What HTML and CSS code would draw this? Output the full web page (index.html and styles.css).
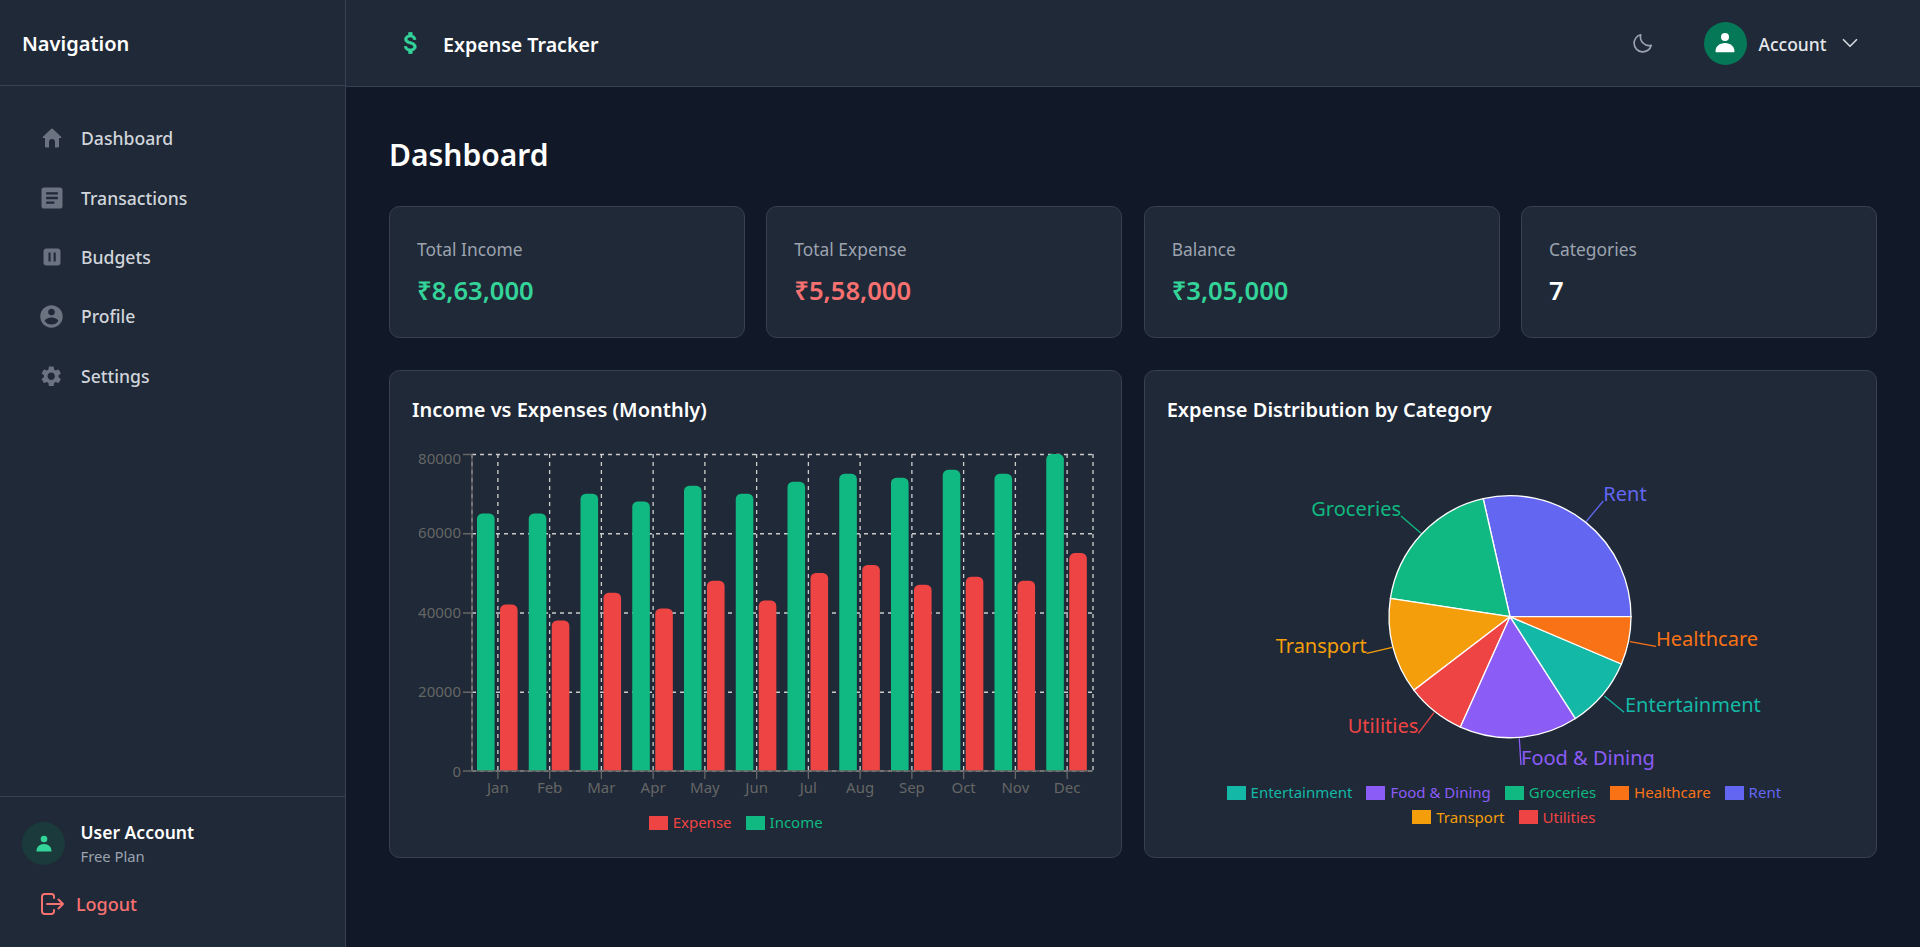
FILE: index.html
```html
<!DOCTYPE html>
<html lang="en">

<head>
    <meta charset="utf-8">
    <meta name="viewport" content="width=device-width, initial-scale=1">
    <title>Expense Tracker</title>
    <link rel="stylesheet" href="styles.css">
</head>

<body>
    <div class="layout">
        <aside class="sidebar">
            <div class="sidebar-head">Navigation</div>
            <nav class="side-nav">
                <a class="nav-link">
                    <span class="nav-icon"><svg width="20" height="20" viewBox="0 0 20 20"><path d="M9.300.8a1 1 0 0 1 1.400 0l8.600 8.200a.5.5 0 0 1-.3.9H17v8.600a1 1 0 0 1-1 1h-3v-5.500a3 3 0 0 0-6 0v5.500H4a1 1 0 0 1-1-1V9.900H1a.5.5 0 0 1-.3-.9z"/></svg></span>
                    Dashboard
                </a>
                <a class="nav-link">
                    <span class="nav-icon"><svg width="28" height="28" viewBox="0 0 24 24"><path d="M19 3H5c-1.100 0-2 .9-2 2v14c0 1.100.9 2 2 2h14c1.100 0 2-.9 2-2V5c0-1.100-.9-2-2-2zm-5 14H7v-2h7v2zm3-4H7v-2h10v2zm0-4H7V7h10v2z"/></svg></span>
                    Transactions
                </a>
                <a class="nav-link">
                    <span class="nav-icon"><svg width="24" height="24" viewBox="0 0 24 24"><path fill-rule="evenodd" d="M6.500 3.500h11a3 3 0 0 1 3 3v11a3 3 0 0 1-3 3h-11a3 3 0 0 1-3-3v-11a3 3 0 0 1 3-3zM8.500 7.500v9h2.100v-9zm5.100 0v9h2.100v-9z"/></svg></span>
                    Budgets
                </a>
                <a class="nav-link">
                    <span class="nav-icon"><svg width="27" height="27" viewBox="0 0 24 24"><path d="M12 2C6.480 2 2 6.480 2 12s4.480 10 10 10 10-4.480 10-10S17.520 2 12 2zm0 3c1.660 0 3 1.340 3 3s-1.340 3-3 3-3-1.340-3-3 1.340-3 3-3zm0 14.200c-2.500 0-4.710-1.280-6-3.220.030-1.990 4-3.080 6-3.080 1.990 0 5.970 1.090 6 3.080-1.290 1.940-3.500 3.220-6 3.220z"/></svg></span>
                    Profile
                </a>
                <a class="nav-link">
                    <span class="nav-icon"><svg width="24.500" height="24.500" viewBox="0 0 24 24"><path d="M19.140 12.940c.04-.3.06-.61.06-.94 0-.32-.02-.64-.07-.94l2.030-1.580c.18-.14.23-.41.12-.61l-1.920-3.320c-.12-.22-.37-.29-.59-.22l-2.390.96c-.5-.38-1.030-.7-1.620-.94l-.36-2.540c-.04-.24-.24-.41-.48-.41h-3.840c-.24 0-.43.17-.47.41l-.36 2.540c-.59.24-1.130.57-1.620.94l-2.390-.96c-.22-.08-.47 0-.59.22L2.740 8.870c-.12.21-.08.47.12.61l2.030 1.580c-.05.3-.09.63-.09.94s.02.64.07.94l-2.030 1.580c-.18.14-.23.41-.12.61l1.920 3.320c.12.22.37.29.59.22l2.390-.96c.5.38 1.030.7 1.620.94l.36 2.540c.05.24.24.41.48.41h3.840c.24 0 .44-.17.47-.41l.36-2.540c.59-.24 1.130-.56 1.620-.94l2.390.96c.22.08.47 0 .59-.22l1.920-3.320c.12-.22.07-.47-.12-.61l-2.010-1.580zM12 15.600c-1.980 0-3.600-1.620-3.600-3.600s1.620-3.600 3.600-3.600 3.600 1.620 3.600 3.600-1.620 3.600-3.600 3.600z"/></svg></span>
                    Settings
                </a>
            </nav>
            <div class="sidebar-foot">
                <div class="user-row">
                    <span class="avatar avatar-soft">
                        <svg width="18" height="18" viewBox="0 0 18 18"><circle cx="9" cy="4" r="3.300"/><path d="M1.500 16c0-4 3-7 7.500-7s7.500 3 7.500 7a.6.6 0 0 1-.6.6H2.100a.6.6 0 0 1-.6-.6z"/></svg>
                    </span>
                    <div class="user-text">
                        <div class="user-name">User Account</div>
                        <div class="user-plan">Free Plan</div>
                    </div>
                </div>
                <a class="logout">
                    <svg width="24" height="22" viewBox="0 0 24 22"><path d="M14 5V3.500A2.500 2.500 0 0 0 11.500 1H4.500A2.500 2.500 0 0 0 2 3.500v15A2.500 2.500 0 0 0 4.500 21h7a2.500 2.500 0 0 0 2.500-2.500V17M7 11h16M18.500 6.500 23 11l-4.500 4.500"/></svg>
                    Logout
                </a>
            </div>
        </aside>

        <div class="page">
            <header class="topbar">
                <div class="brand">
                    <svg width="28" height="28" viewBox="0 0 24 24"><path d="M11.800 10.900c-2.270-.59-3-1.200-3-2.150 0-1.090 1.010-1.850 2.700-1.850 1.780 0 2.440.85 2.500 2.100h2.210c-.07-1.720-1.120-3.300-3.210-3.810V3h-3v2.160c-1.940.42-3.500 1.680-3.500 3.610 0 2.310 1.910 3.460 4.700 4.130 2.500.6 3 1.480 3 2.410 0 .69-.49 1.790-2.700 1.790-2.060 0-2.870-.92-2.980-2.100h-2.200c.12 2.190 1.760 3.420 3.680 3.830V21h3v-2.150c1.950-.37 3.500-1.500 3.500-3.550 0-2.840-2.430-3.810-4.700-4.400z"/></svg>
                    <span class="brand-name">Expense Tracker</span>
                </div>
                <div class="top-actions">
                    <svg class="moon" width="22" height="22" viewBox="0 0 24 24"><path d="M21 14.500A9.500 9.500 0 0 1 9.500 3 9.500 9.500 0 1 0 21 14.500z"/></svg>
                    <div class="account">
                        <span class="avatar avatar-solid">
                            <svg width="20" height="20" viewBox="0 0 20 20"><circle cx="10" cy="4" r="4"/><path d="M.5 18.500c0-5 4-8.500 9.500-8.500s9.500 3.500 9.500 8.500a.7.7 0 0 1-.7.7H1.200a.7.7 0 0 1-.7-.7z"/></svg>
                        </span>
                        <span class="account-name">Account</span>
                        <svg class="chevron" width="26" height="26" viewBox="0 0 24 24"><path d="M6 9l6 6 6-6"/></svg>
                    </div>
                </div>
            </header>

            <main class="content">
                <h1>Dashboard</h1>

                <section class="stats">
                    <div class="card stat">
                        <div class="stat-label">Total Income</div>
                        <div class="stat-value green">₹8,63,000</div>
                    </div>
                    <div class="card stat">
                        <div class="stat-label">Total Expense</div>
                        <div class="stat-value red">₹5,58,000</div>
                    </div>
                    <div class="card stat">
                        <div class="stat-label">Balance</div>
                        <div class="stat-value green">₹3,05,000</div>
                    </div>
                    <div class="card stat">
                        <div class="stat-label">Categories</div>
                        <div class="stat-value">7</div>
                    </div>
                </section>

                <section class="charts">
                    <div class="card chart-card">
                        <h2>Income vs Expenses (Monthly)</h2>
                        <svg class="bar-chart" width="687" height="356" viewBox="0 0 687 356">
                            <defs>
                                <clipPath id="plot"><rect x="0" y="0" width="687" height="327"/></clipPath>
                            </defs>
                            <g class="grid">
                                <path d="M60 10.500H681M60 89.750H681M60 169H681M60 248.250H681M60 327H681"/>
                                <path d="M60 10V327M85.880 10V327M137.630 10V327M189.380 10V327M241.130 10V327M292.880 10V327M344.630 10V327M396.380 10V327M448.130 10V327M499.880 10V327M551.630 10V327M603.380 10V327M655.130 10V327M681 10V327"/>
                            </g>
                            <g clip-path="url(#plot)">
                                <g class="bars-income">
                                    <rect x="65" y="69.44" width="17.6" height="320" rx="5.3"/>
                                    <rect x="116.75" y="69.44" width="17.6" height="320" rx="5.3"/>
                                    <rect x="168.5" y="49.63" width="17.6" height="320" rx="5.3"/>
                                    <rect x="220.25" y="57.55" width="17.6" height="320" rx="5.3"/>
                                    <rect x="272" y="41.7" width="17.6" height="320" rx="5.3"/>
                                    <rect x="323.75" y="49.63" width="17.6" height="320" rx="5.3"/>
                                    <rect x="375.5" y="37.74" width="17.6" height="320" rx="5.3"/>
                                    <rect x="427.25" y="29.81" width="17.6" height="320" rx="5.3"/>
                                    <rect x="479" y="33.8" width="17.6" height="320" rx="5.3"/>
                                    <rect x="530.75" y="25.85" width="17.6" height="320" rx="5.3"/>
                                    <rect x="582.5" y="29.81" width="17.6" height="320" rx="5.3"/>
                                    <rect x="634.25" y="10" width="17.6" height="340" rx="5.3"/>
                                </g>
                                <g class="bars-expense">
                                    <rect x="88" y="160.6" width="17.6" height="200" rx="5.3"/>
                                    <rect x="139.75" y="176.4" width="17.6" height="200" rx="5.3"/>
                                    <rect x="191.5" y="148.7" width="17.6" height="200" rx="5.3"/>
                                    <rect x="243.25" y="164.5" width="17.6" height="200" rx="5.3"/>
                                    <rect x="295" y="136.8" width="17.6" height="210" rx="5.3"/>
                                    <rect x="346.75" y="156.6" width="17.6" height="200" rx="5.3"/>
                                    <rect x="398.5" y="128.9" width="17.6" height="220" rx="5.3"/>
                                    <rect x="450.25" y="121" width="17.6" height="220" rx="5.3"/>
                                    <rect x="502" y="140.8" width="17.6" height="200" rx="5.3"/>
                                    <rect x="553.75" y="132.8" width="17.6" height="220" rx="5.3"/>
                                    <rect x="605.5" y="136.8" width="17.6" height="210" rx="5.3"/>
                                    <rect x="657.25" y="109.1" width="17.6" height="230" rx="5.3"/>
                                </g>
                            </g>
                            <path class="axis" d="M60 10V327H681M51 10.500H60M51 89.750H60M51 169H60M51 248.250H60M51 327H60M85.880 327V335M137.630 327V335M189.380 327V335M241.130 327V335M292.880 327V335M344.630 327V335M396.380 327V335M448.130 327V335M499.880 327V335M551.630 327V335M603.380 327V335M655.130 327V335"/>
                            <g class="y-labels">
                                <text x="49" y="20">80000</text>
                                <text x="49" y="94">60000</text>
                                <text x="49" y="174">40000</text>
                                <text x="49" y="253">20000</text>
                                <text x="49" y="333">0</text>
                            </g>
                            <g class="x-labels">
                                <text x="85.880" y="349">Jan</text>
                                <text x="137.630" y="349">Feb</text>
                                <text x="189.380" y="349">Mar</text>
                                <text x="241.130" y="349">Apr</text>
                                <text x="292.880" y="349">May</text>
                                <text x="344.630" y="349">Jun</text>
                                <text x="396.380" y="349">Jul</text>
                                <text x="448.130" y="349">Aug</text>
                                <text x="499.880" y="349">Sep</text>
                                <text x="551.630" y="349">Oct</text>
                                <text x="603.380" y="349">Nov</text>
                                <text x="655.130" y="349">Dec</text>
                            </g>
                        </svg>
                        <ul class="legend legend-bar">
                            <li class="c-expense"><i></i>Expense</li>
                            <li class="c-income"><i></i>Income</li>
                        </ul>
                    </div>

                    <div class="card chart-card">
                        <h2>Expense Distribution by Category</h2>
                        <svg class="pie-chart" width="687" height="335" viewBox="0 0 687 335">
                            <g class="slices">
                                <path class="f-rent" d="M343 172.700L464 172.700A121 121 0 0 0 316.200 54.700Z"/>
                                <path class="f-groceries" d="M343 172.700L316.200 54.700A121 121 0 0 0 223.400 154.400Z"/>
                                <path class="f-transport" d="M343 172.700L223.400 154.400A121 121 0 0 0 246.900 246.200Z"/>
                                <path class="f-utilities" d="M343 172.700L246.900 246.200A121 121 0 0 0 293.400 283.100Z"/>
                                <path class="f-food" d="M343 172.700L293.400 283.100A121 121 0 0 0 408.400 274.500Z"/>
                                <path class="f-entertainment" d="M343 172.700L408.400 274.500A121 121 0 0 0 454.400 220Z"/>
                                <path class="f-healthcare" d="M343 172.700L454.400 220A121 121 0 0 0 464 172.700Z"/>
                            </g>
                            <g class="pie-lines">
                                <path class="s-rent" d="M419 77.700L436.300 57"/>
                                <path class="s-groceries" d="M254 89.300L234 72"/>
                                <path class="s-transport" d="M225.300 203.300L199.700 209.300"/>
                                <path class="s-utilities" d="M267 268.700L251.300 289.300"/>
                                <path class="s-food" d="M352.300 294.300L354 321"/>
                                <path class="s-entertainment" d="M437.300 252L457 268.300"/>
                                <path class="s-healthcare" d="M463 197.700L489 202.300"/>
                            </g>
                            <g class="pie-labels">
                                <text class="t-rent" x="436.300" y="57">Rent</text>
                                <text class="t-groceries end" x="234" y="72">Groceries</text>
                                <text class="t-transport end" x="199.700" y="209">Transport</text>
                                <text class="t-utilities end" x="251.300" y="289">Utilities</text>
                                <text class="t-food" x="354" y="321">Food &amp; Dining</text>
                                <text class="t-entertainment" x="458" y="268">Entertainment</text>
                                <text class="t-healthcare" x="489" y="202">Healthcare</text>
                            </g>
                        </svg>
                        <ul class="legend legend-pie">
                            <li class="c-entertainment"><i></i>Entertainment</li>
                            <li class="c-food"><i></i>Food &amp; Dining</li>
                            <li class="c-groceries"><i></i>Groceries</li>
                            <li class="c-healthcare"><i></i>Healthcare</li>
                            <li class="c-rent"><i></i>Rent</li>
                            <li class="c-transport"><i></i>Transport</li>
                            <li class="c-utilities"><i></i>Utilities</li>
                        </ul>
                    </div>
                </section>
            </main>
        </div>
    </div>
</body>

</html>
```

FILE: styles.css
```css
* {
    box-sizing: border-box;
}

body {
    margin: 0;
    background: #111827;
    color: #fff;
    font-family: "Noto Sans", "Open Sans", Arial, sans-serif;
}

.layout {
    display: flex;
    height: 947px;
    overflow: hidden;
}

/* sidebar */

.sidebar {
    width: 346px;
    flex: none;
    display: flex;
    flex-direction: column;
    background: #1f2937;
    border-right: 1px solid #374151;
}

.sidebar-head {
    height: 86px;
    padding: 2px 0 0 22px;
    display: flex;
    align-items: center;
    font-size: 20px;
    font-weight: 600;
    border-bottom: 1px solid #374151;
}

.side-nav {
    padding-top: 22.5px;
}

.nav-link {
    height: 59.4px;
    padding-left: 39.5px;
    display: flex;
    align-items: center;
    gap: 17.5px;
    font-size: 17.6px;
    font-weight: 500;
    color: #d1d5db;
}

.nav-icon {
    width: 24px;
    height: 24px;
    display: flex;
    align-items: center;
    justify-content: center;
    flex: none;
}

.nav-icon svg {
    flex: none;
    fill: #6b7280;
}

.sidebar-foot {
    margin-top: auto;
    height: 151px;
    padding: 24px 0 24px 22px;
    border-top: 1px solid #374151;
}

.user-row {
    display: flex;
    align-items: center;
    gap: 15.5px;
}

.avatar {
    width: 43px;
    height: 43px;
    border-radius: 50%;
    display: flex;
    align-items: center;
    justify-content: center;
    flex: none;
}

.avatar-soft {
    background: #1b3a3c;
}

.avatar-soft svg {
    fill: #34d399;
}

.avatar-solid {
    background: #047857;
}

.avatar-solid svg {
    fill: #fff;
}

.user-name {
    font-size: 17.5px;
    font-weight: 600;
    line-height: 24px;
    margin-top: -1px;
}

.user-plan {
    font-size: 14.8px;
    line-height: 20px;
    margin-top: 2px;
    color: #9ca3af;
}

.logout {
    height: 40px;
    margin-top: 18px;
    padding-left: 18px;
    display: flex;
    align-items: center;
    gap: 12px;
    font-size: 18px;
    font-weight: 500;
    color: #f87171;
}

.logout svg {
    fill: none;
    stroke: #f87171;
    stroke-width: 2;
    stroke-linecap: round;
    stroke-linejoin: round;
}

/* top bar */

.page {
    flex: 1;
    min-width: 0;
}

.topbar {
    height: 87px;
    padding: 0 57.5px 0 50.5px;
    display: flex;
    align-items: center;
    justify-content: space-between;
    background: #1f2937;
    border-bottom: 1px solid #374151;
}

.brand {
    display: flex;
    align-items: center;
    gap: 18.5px;
    font-size: 19.6px;
    font-weight: 600;
}

.brand-name,
.account-name {
    padding-top: 2px;
}

.brand svg {
    fill: #34d399;
    stroke: #34d399;
    stroke-width: .6;
}

.top-actions {
    display: flex;
    align-items: center;
    gap: 49.5px;
}

.moon {
    fill: none;
    stroke: #9ca3af;
    stroke-width: 1.8;
    stroke-linejoin: round;
}

.account {
    display: flex;
    align-items: center;
    gap: 11px;
}

.account-name {
    margin-left: 1px;
    font-size: 17.5px;
    font-weight: 500;
    color: #e5e7eb;
}

.chevron {
    margin-left: -1px;
    fill: none;
    stroke: #d1d5db;
    stroke-width: 1.6;
    stroke-linecap: round;
    stroke-linejoin: round;
}

/* content */

.content {
    padding: 49px 43px 0;
}

h1 {
    margin: 0 0 32px;
    font-size: 30px;
    line-height: 38px;
    font-weight: 600;
}

.card {
    background: #1f2937;
    border: 1px solid #374151;
    border-radius: 10.5px;
}

.stats {
    display: grid;
    grid-template-columns: repeat(4, 1fr);
    gap: 21.33px;
    margin-bottom: 32px;
}

.stat {
    height: 132px;
    padding: 28px 27px 0;
}

.stat-label {
    font-size: 17.4px;
    line-height: 28px;
    color: #9ca3af;
}

.stat-value {
    margin-top: 11px;
    font-size: 25.6px;
    line-height: 34px;
    font-weight: 600;
}

.green {
    color: #34d399;
}

.red {
    color: #f87171;
}

.charts {
    display: grid;
    grid-template-columns: 1fr 1fr;
    gap: 21.33px;
}

.chart-card {
    height: 488px;
    padding: 22px;
}

h2 {
    margin: 2.4px 0 18.6px;
    font-size: 20px;
    line-height: 30px;
    font-weight: 600;
}

.chart-card svg {
    display: block;
}

.grid path {
    fill: none;
    stroke: #ccc;
    stroke-width: 1.33;
    stroke-dasharray: 4 4;
}

.bars-income rect {
    fill: #10b981;
}

.bars-expense rect {
    fill: #ef4444;
}

.axis {
    fill: none;
    stroke: #666;
    stroke-width: 1.33;
}

.y-labels text,
.x-labels text {
    fill: #666;
    font-size: 15px;
}

.y-labels text {
    text-anchor: end;
}

.x-labels text {
    text-anchor: middle;
}

.slices path {
    stroke: #fff;
    stroke-width: 1.33;
}

.pie-lines path {
    fill: none;
    stroke-width: 1.33;
}

.pie-labels text {
    font-size: 20px;
}

.pie-labels .end {
    text-anchor: end;
}

.f-rent { fill: #6366f1; }
.f-groceries { fill: #10b981; }
.f-transport { fill: #f59e0b; }
.f-utilities { fill: #ef4444; }
.f-food { fill: #8b5cf6; }
.f-entertainment { fill: #14b8a6; }
.f-healthcare { fill: #f97316; }

.s-rent { stroke: #6366f1; }
.s-groceries { stroke: #10b981; }
.s-transport { stroke: #f59e0b; }
.s-utilities { stroke: #ef4444; }
.s-food { stroke: #8b5cf6; }
.s-entertainment { stroke: #14b8a6; }
.s-healthcare { stroke: #f97316; }

.t-rent { fill: #6366f1; }
.t-groceries { fill: #10b981; }
.t-transport { fill: #f59e0b; }
.t-utilities { fill: #ef4444; }
.t-food { fill: #8b5cf6; }
.t-entertainment { fill: #14b8a6; }
.t-healthcare { fill: #f97316; }

/* legends */

.legend {
    margin: 0;
    padding: 0;
    list-style: none;
    display: flex;
    flex-wrap: wrap;
    justify-content: center;
    column-gap: 14px;
    font-size: 15px;
    line-height: 24.5px;
}

.legend-bar {
    margin-top: 10.5px;
    padding-right: 40px;
}

.legend-pie {
    margin-top: 1.5px;
    padding: 0 46px 0 33px;
}

.legend li {
    display: flex;
    align-items: center;
    gap: 5px;
}

.legend i {
    width: 19px;
    height: 14px;
    background: currentColor;
}

.c-expense, .c-utilities { color: #ef4444; }
.c-income, .c-groceries { color: #10b981; }
.c-entertainment { color: #14b8a6; }
.c-food { color: #8b5cf6; }
.c-healthcare { color: #f97316; }
.c-rent { color: #6366f1; }
.c-transport { color: #f59e0b; }
```
